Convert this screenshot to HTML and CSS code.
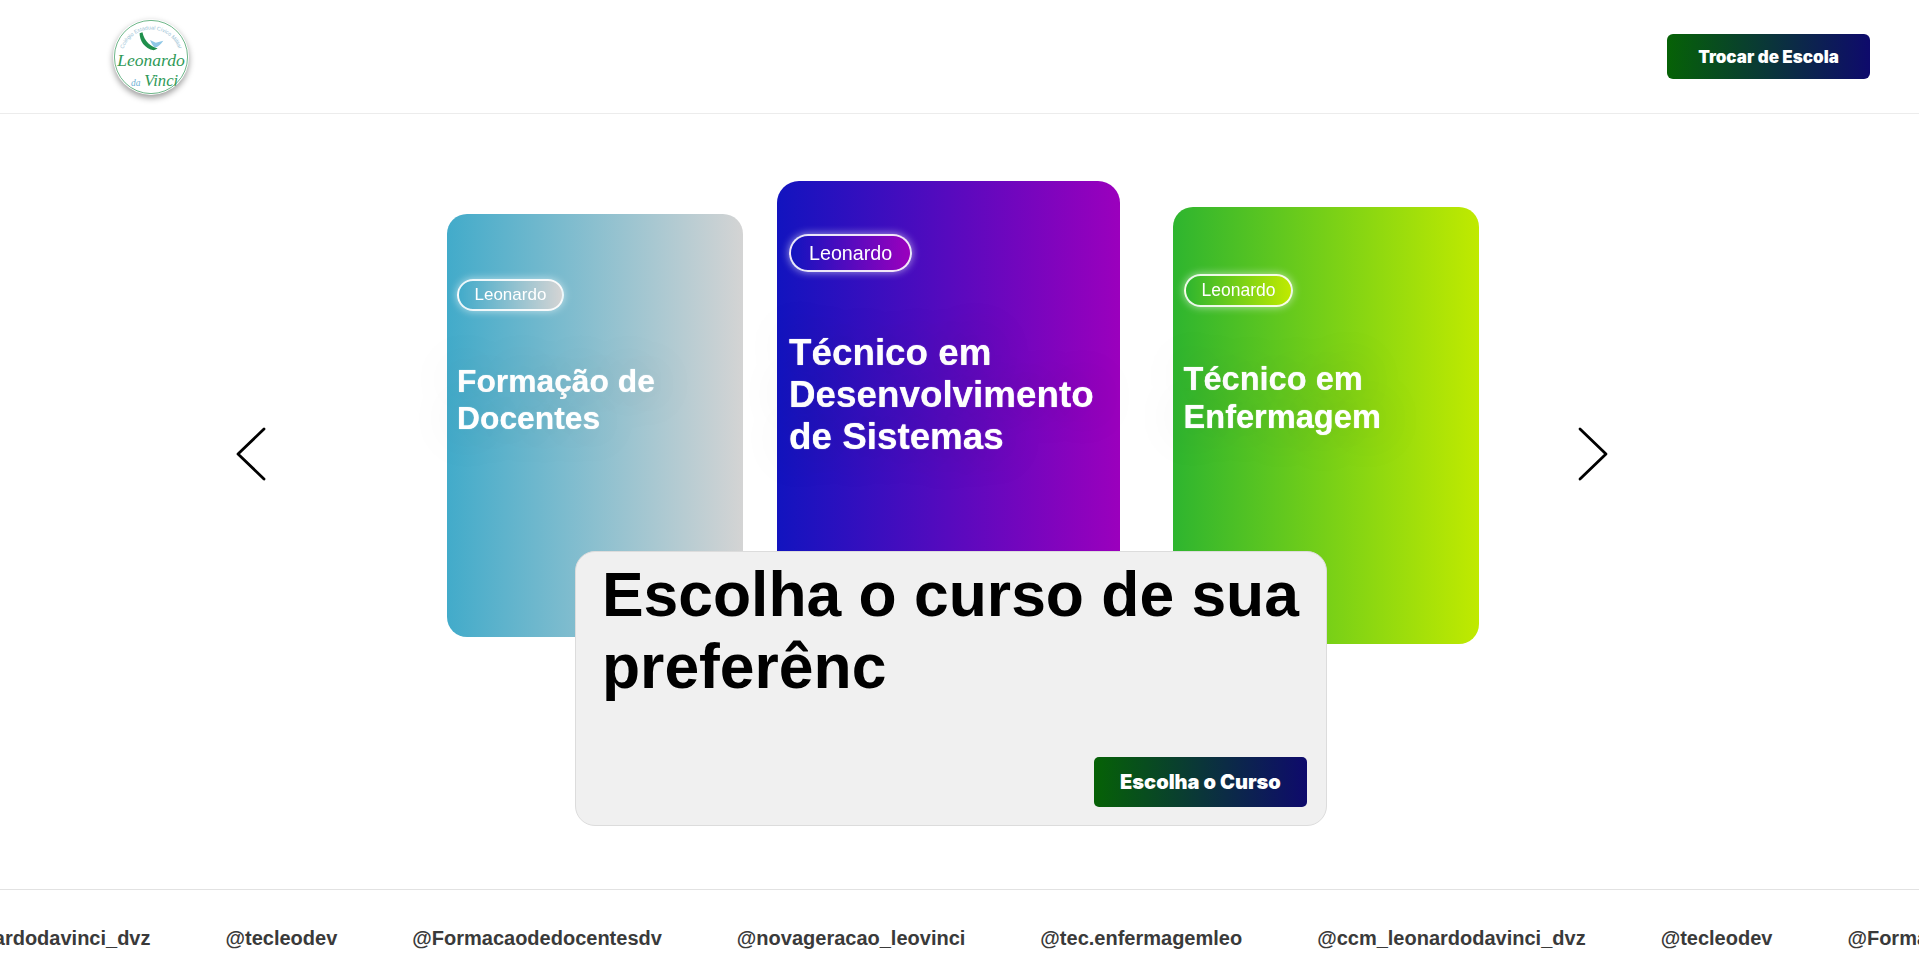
FILE: index.html
```html
<!DOCTYPE html>
<html lang="en">
  <head>
    <meta charset="UTF-8" />
    <meta name="viewport" content="width=device-width, initial-scale=1.0" />
    <title>Escolha o Curso</title>
    <link rel="stylesheet" href="styles.css">
  </head>
  <body>
    <header class="topbar">
      <svg class="logo" viewBox="0 0 80 80" role="img" aria-label="Leonardo da Vinci">
        <defs>
          <path id="logoArc" d="M9 42 A31 31 0 0 1 71 42" />
        </defs>
        <circle cx="40" cy="40" r="38.5" fill="#fff" stroke="#3f9f63" stroke-width="0.8" />
        <text class="logo-arc"><textPath href="#logoArc" startOffset="50%" text-anchor="middle">Colégio Estadual Cívico Militar</textPath></text>
        <path d="M28 15 C28 23 33 31 43 33 L47 31 C40 29 33 24 31 14 Z" fill="#1f8f4c" />
        <path d="M39 22 L45 25 L53 23 C50 27 47 30 44 30 C42 28 40 25 39 22 Z" fill="#8fc7e6" />
        <text class="logo-name" x="40" y="49" text-anchor="middle">Leonardo</text>
        <text class="logo-da" x="19" y="70">da</text>
        <text class="logo-vinci" x="33" y="70">Vinci</text>
      </svg>
      <button class="btn btn-school">Trocar de Escola</button>
    </header>

    <main class="stage">
      <section class="carousel">
        <button class="arrow arrow-prev" aria-label="Anterior">
          <svg viewBox="0 0 30 54"><path d="M28 2 L2 27 L28 52" /></svg>
        </button>

        <article class="card card-docentes">
          <span class="pill">Leonardo</span>
          <h2>Formação de Docentes</h2>
        </article>
        <article class="card card-sistemas">
          <span class="pill">Leonardo</span>
          <h2>Técnico em Desenvolvimento de Sistemas</h2>
        </article>
        <article class="card card-enfermagem">
          <span class="pill">Leonardo</span>
          <h2>Técnico em Enfermagem</h2>
        </article>

        <button class="arrow arrow-next" aria-label="Próximo">
          <svg viewBox="0 0 30 54"><path d="M2 2 L28 27 L2 52" /></svg>
        </button>
      </section>

      <section class="chooser">
        <h1>Escolha o curso de sua preferênc</h1>
        <button class="btn btn-course">Escolha o Curso</button>
      </section>
    </main>

    <footer class="ticker">
      <div class="ticker-track">
        <span>@ccm_leonardodavinci_dvz</span>
        <span>@tecleodev</span>
        <span>@Formacaodedocentesdv</span>
        <span>@novageracao_leovinci</span>
        <span>@tec.enfermagemleo</span>
        <span>@ccm_leonardodavinci_dvz</span>
        <span>@tecleodev</span>
        <span>@Formacaodedocentesdv</span>
      </div>
    </footer>
  </body>
</html>
```

FILE: styles.css
```css
* {
  box-sizing: border-box;
}

html,
body {
  height: 100%;
}

body {
  margin: 0;
  background-color: white;
  color: black;
  font-family: "Liberation Sans", Arial, sans-serif;
  overflow: hidden;
}

.topbar {
  height: 114px;
  padding: 0 49px 0 113px;
  display: flex;
  justify-content: space-between;
  align-items: center;
  border-bottom: 1px solid #ececec;
}

.logo {
  width: 76px;
  height: 76px;
  margin-top: 1px;
  border-radius: 50%;
  box-shadow: 0 3px 6px rgba(0, 0, 0, 0.4);
}

.logo-arc {
  font-size: 5.6px;
  fill: #9cc3d6;
}

.logo-name {
  font-family: "Liberation Serif", serif;
  font-style: italic;
  font-size: 18.5px;
  fill: #2f9a58;
}

.logo-da {
  font-family: "Liberation Serif", serif;
  font-style: italic;
  font-size: 10px;
  fill: #6fb2d4;
}

.logo-vinci {
  font-family: "Liberation Serif", serif;
  font-style: italic;
  font-size: 17.5px;
  fill: #2f9a58;
}

.btn {
  border: none;
  color: white;
  font-family: Inter, "Liberation Sans", sans-serif;
  font-weight: 900;
  background: linear-gradient(to right, #066206, #0e0a6c);
  cursor: pointer;
}

.btn-school {
  width: 203px;
  height: 45px;
  border-radius: 6px;
  font-size: 17px;
}

.stage {
  height: 775px;
  padding-top: 67px;
}

.carousel {
  position: relative;
  height: 490px;
  padding-left: 447px;
  display: flex;
  align-items: center;
}

.arrow {
  position: absolute;
  top: 246px;
  width: 30px;
  height: 54px;
  padding: 0;
  border: none;
  background: none;
}

.arrow svg {
  display: block;
  width: 100%;
  height: 100%;
  fill: none;
  stroke: black;
  stroke-width: 2.8;
  stroke-linecap: round;
  stroke-linejoin: round;
}

.arrow-prev {
  left: 236px;
}

.arrow-next {
  left: 1578px;
}

.card {
  flex: none;
  color: white;
}

.card h2 {
  margin: 0;
  font-weight: 700;
  filter: blur(0.4px);
  text-shadow: 0 0 1px rgba(255, 255, 255, 0.8), 0 0 50px rgba(0, 0, 0, 0.3);
}

.pill {
  display: block;
  width: fit-content;
  border: 2px solid rgba(255, 255, 255, 0.9);
  border-radius: 999px;
  background: inherit;
  box-shadow: 0 0 8px rgba(255, 255, 255, 0.6);
  filter: blur(0.3px);
}

.card-docentes {
  width: 296px;
  height: 423px;
  margin-bottom: 2px;
  padding: 65px 10px 0;
  border-radius: 20px;
  background: linear-gradient(to right, #42abca, #d4d4d4);
}

.card-docentes .pill {
  padding: 0 15.5px;
  line-height: 28px;
  font-size: 17px;
}

.card-docentes h2 {
  margin-top: 52px;
  font-size: 31.8px;
  line-height: 37px;
}

.card-sistemas {
  width: 343px;
  height: 490px;
  margin-left: 34px;
  padding: 53px 12px 0;
  border-radius: 22px;
  background: linear-gradient(to right, #1214bf, #9b00bd);
}

.card-sistemas .pill {
  padding: 0 18px;
  line-height: 34px;
  font-size: 19.7px;
}

.card-sistemas h2 {
  margin-top: 60px;
  font-size: 36.8px;
  line-height: 42px;
}

.card-enfermagem {
  width: 306px;
  height: 437px;
  margin-left: 52.5px;
  margin-bottom: 2px;
  padding: 67px 11px 0;
  border-radius: 20px;
  background: linear-gradient(to right, #2eb52f, #c0ea00);
}

.card-enfermagem .pill {
  padding: 0 16px;
  line-height: 29px;
  font-size: 17.5px;
}

.card-enfermagem h2 {
  margin-top: 53px;
  font-size: 32.6px;
  line-height: 38px;
}

.chooser {
  position: relative;
  width: 752px;
  height: 275px;
  margin: -120px 0 0 575px;
  padding: 7px 19px 18px 26px;
  display: flex;
  flex-direction: column;
  border: 1px solid #dcdcdc;
  border-radius: 20px;
  background-color: #f0f0f0;
}

.chooser h1 {
  margin: 0;
  font-size: 62.4px;
  font-weight: 700;
  line-height: 72px;
}

.btn-course {
  width: 213px;
  height: 50px;
  margin-top: auto;
  align-self: flex-end;
  border-radius: 5px;
  font-size: 20px;
}

.ticker {
  height: 75px;
  border-top: 1px solid #e2e2e2;
  overflow: hidden;
}

.ticker-track {
  margin-left: -118px;
  padding-top: 37px;
  display: flex;
  gap: 75px;
  width: max-content;
  color: #3a3a3a;
  font-size: 20px;
  font-weight: 700;
  line-height: 23px;
}
```
